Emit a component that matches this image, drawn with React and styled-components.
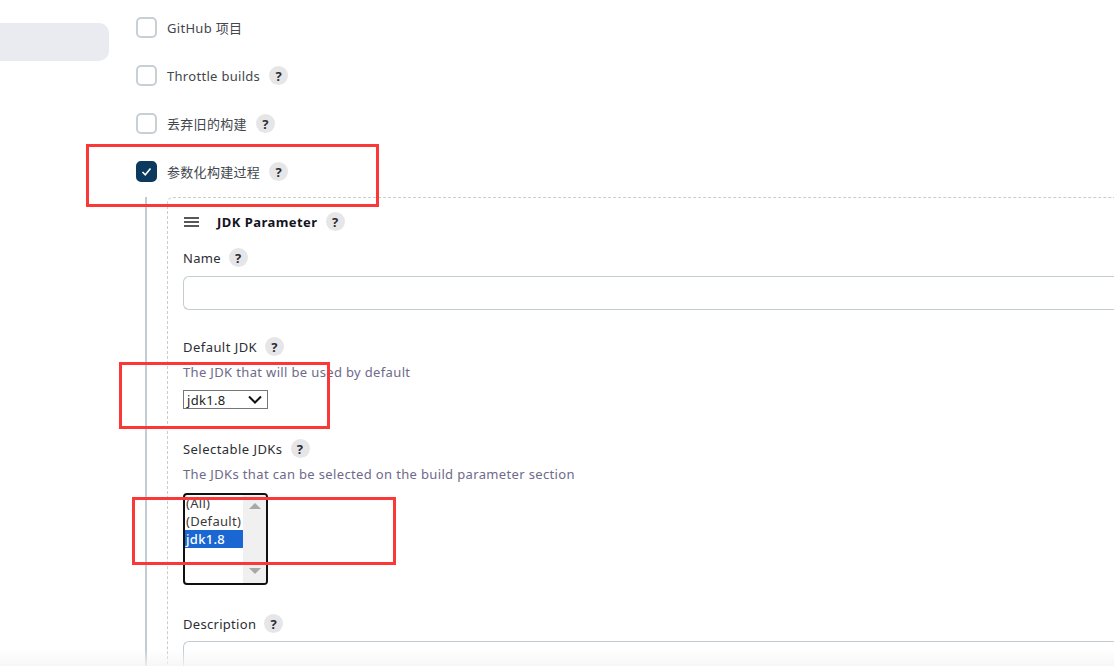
import React from "react";
import styled, { createGlobalStyle } from "styled-components";

const GlobalStyle = createGlobalStyle`
  html, body {
    margin: 0;
    padding: 0;
    background: #ffffff;
  }
  body {
    font-family: "Noto Sans", "Noto Sans CJK SC", sans-serif;
    color: #333333;
  }
`;

const Page = styled.div`
  position: relative;
  display: flex;
  width: 1114px;
  height: 666px;
  overflow: hidden;
  background: #ffffff;
`;

const Sidebar = styled.div`
  width: 136px;
  flex: none;
  padding-top: 23px;
  box-sizing: border-box;
`;

const SideItem = styled.div`
  width: 109px;
  height: 38px;
  background: #eaebf0;
  border-radius: 0 10px 10px 0;
`;

const Main = styled.div`
  flex: 1;
  min-width: 0;
  padding-top: 3.5px;
`;

const OptionRow = styled.div`
  display: flex;
  align-items: center;
  height: 48px;
`;

const CheckBox = styled.span`
  width: 21px;
  height: 21px;
  box-sizing: border-box;
  flex: none;
  display: flex;
  align-items: center;
  justify-content: center;
  border-radius: 5px;
  border: 2px solid ${({ checked }) => (checked ? "#0b3a5e" : "#c8d0d6")};
  background: ${({ checked }) => (checked ? "#0b3a5e" : "#ffffff")};
`;

const OptionLabel = styled.span`
  margin-left: 10px;
  font-size: 13px;
  letter-spacing: 0.3px;
  color: #43474d;
`;

const Help = styled.span`
  display: inline-flex;
  align-items: center;
  justify-content: center;
  width: 19px;
  height: 19px;
  margin-left: 9px;
  flex: none;
  border-radius: 50%;
  background: #e6e6e8;
  color: #2b2d33;
  font-size: 13px;
  font-weight: 700;
`;

const Nested = styled.div`
  display: flex;
  height: 480px;
  margin-top: 1.5px;
  margin-left: 9px;
`;

const IndentLine = styled.div`
  width: 2px;
  flex: none;
  background: #c3ccd3;
`;

const ParamCard = styled.div`
  flex: 1;
  margin-left: 20px;
  padding: 13px 0 0 15px;
  border-top: 1px dashed #c8cdd2;
  border-left: 1px dashed #c8cdd2;
  border-top-left-radius: 6px;

  ${Help} {
    margin-left: 8px;
  }
`;

const CardHeader = styled.div`
  display: flex;
  align-items: center;
  height: 21px;
`;

const Handle = styled.svg`
  width: 16px;
  height: 12px;
  flex: none;
  margin-left: 1px;
`;

const CardTitle = styled.span`
  margin-left: 17px;
  font-size: 13px;
  font-weight: 700;
  letter-spacing: 0.45px;
  color: #14141f;
`;

const Field = styled.div`
  margin-top: ${({ top }) => top}px;
`;

const FieldLabel = styled.div`
  display: flex;
  align-items: center;
  height: 19px;
  font-size: 13px;
  letter-spacing: ${({ wide }) => (wide ? "0.45px" : "0.3px")};
  color: #2b2e34;
`;

const TextBox = styled.div`
  margin-top: ${({ gap }) => gap}px;
  height: 34px;
  box-sizing: border-box;
  border: 1px solid #c3ccd1;
  border-right: none;
  border-radius: 6px 0 0 6px;
  background: #ffffff;
`;

const Hint = styled.div`
  margin-top: 7px;
  font-size: 13px;
  line-height: 18px;
  letter-spacing: 0.35px;
  color: #6e6a8a;
`;

const Dropdown = styled.div`
  display: flex;
  align-items: center;
  justify-content: space-between;
  width: 85px;
  height: 19px;
  margin-top: 9px;
  padding: 0 5px 0 3px;
  box-sizing: border-box;
  border: 1px solid #767676;
  font-size: 13px;
  letter-spacing: 0.3px;
  color: #222222;
`;

const ListBox = styled.div`
  display: flex;
  width: 85px;
  height: 92px;
  margin-top: 10px;
  box-sizing: border-box;
  border: 2px solid #101010;
  border-radius: 4px;
  overflow: hidden;
`;

const ListOptions = styled.div`
  flex: 1;
  min-width: 0;
  margin-top: -1px;
`;

const ListOption = styled.div`
  height: 18px;
  padding-left: 1px;
  line-height: 18px;
  font-size: 13px;
  font-weight: ${({ selected }) => (selected ? 500 : 400)};
  letter-spacing: 0.3px;
  white-space: nowrap;
  color: ${({ selected }) => (selected ? "#ffffff" : "#3a3a3a")};
  background: ${({ selected }) => (selected ? "#1a66d2" : "transparent")};
`;

const ScrollTrack = styled.div`
  width: 23px;
  flex: none;
  display: flex;
  flex-direction: column;
  align-items: center;
  justify-content: space-between;
  padding: 8px 0 9px;
  box-sizing: border-box;
  background: #f0f0f0;
`;

const ScrollArrow = styled.span`
  width: 0;
  height: 0;
  border-left: 6px solid transparent;
  border-right: 6px solid transparent;
  border-top: ${({ up }) => (up ? "none" : "6px solid #a8a8a8")};
  border-bottom: ${({ up }) => (up ? "6px solid #a8a8a8" : "none")};
`;

const BottomFade = styled.div`
  position: absolute;
  left: 0;
  right: 0;
  bottom: 0;
  height: 16px;
  background: linear-gradient(to bottom, rgba(245, 245, 245, 0), rgba(245, 245, 245, 0.8));
`;

// red annotation frames drawn over the screenshot
const RedFrame = styled.div`
  position: absolute;
  left: ${({ x }) => x}px;
  top: ${({ y }) => y}px;
  width: ${({ w }) => w}px;
  height: ${({ h }) => h}px;
  box-sizing: border-box;
  border: 3px solid #fb3838;
`;

const options = [
  { label: "GitHub 项目" },
  { label: "Throttle builds", help: true },
  { label: "丢弃旧的构建", help: true },
  { label: "参数化构建过程", help: true, checked: true },
];

const App = () => {
  return (
    <Page>
      <GlobalStyle />
      <Sidebar>
        <SideItem />
      </Sidebar>
      <Main>
        {options.map((option) => (
          <OptionRow key={option.label}>
            <CheckBox checked={option.checked}>
              {option.checked && (
                <svg width="13" height="13" viewBox="0 0 13 13" fill="none">
                  <path d="M2.5 7l2.8 2.8L10.5 3.5" stroke="#fff" strokeWidth="1.6" />
                </svg>
              )}
            </CheckBox>
            <OptionLabel>{option.label}</OptionLabel>
            {option.help && <Help>?</Help>}
          </OptionRow>
        ))}
        <Nested>
          <IndentLine />
          <ParamCard>
            <CardHeader>
              <Handle viewBox="0 0 16 12">
                <path d="M0 2h15M0 6h15M0 10h15" stroke="#222" strokeWidth="1.4" />
              </Handle>
              <CardTitle>JDK Parameter</CardTitle>
              <Help>?</Help>
            </CardHeader>
            <Field top={16}>
              <FieldLabel>
                Name <Help>?</Help>
              </FieldLabel>
              <TextBox gap={9} />
            </Field>
            <Field top={27}>
              <FieldLabel wide>
                Default JDK <Help>?</Help>
              </FieldLabel>
              <Hint>The JDK that will be used by default</Hint>
              <Dropdown>
                jdk1.8
                <svg width="14" height="9" viewBox="0 0 14 9" fill="none">
                  <path d="M1 1.5l6 6 6-6" stroke="#111" strokeWidth="2" />
                </svg>
              </Dropdown>
            </Field>
            <Field top={30}>
              <FieldLabel wide>
                Selectable JDKs <Help>?</Help>
              </FieldLabel>
              <Hint>The JDKs that can be selected on the build parameter section</Hint>
              <ListBox>
                <ListOptions>
                  <ListOption>(All)</ListOption>
                  <ListOption>(Default)</ListOption>
                  <ListOption selected>jdk1.8</ListOption>
                </ListOptions>
                <ScrollTrack>
                  <ScrollArrow up />
                  <ScrollArrow />
                </ScrollTrack>
              </ListBox>
            </Field>
            <Field top={29}>
              <FieldLabel>
                Description <Help>?</Help>
              </FieldLabel>
              <TextBox gap={8} />
            </Field>
          </ParamCard>
        </Nested>
      </Main>
      <BottomFade />
      <RedFrame x={86} y={144} w={293} h={63} />
      <RedFrame x={119} y={362} w={211} h={67} />
      <RedFrame x={132} y={497} w={264} h={68} />
    </Page>
  );
};

export default App;
